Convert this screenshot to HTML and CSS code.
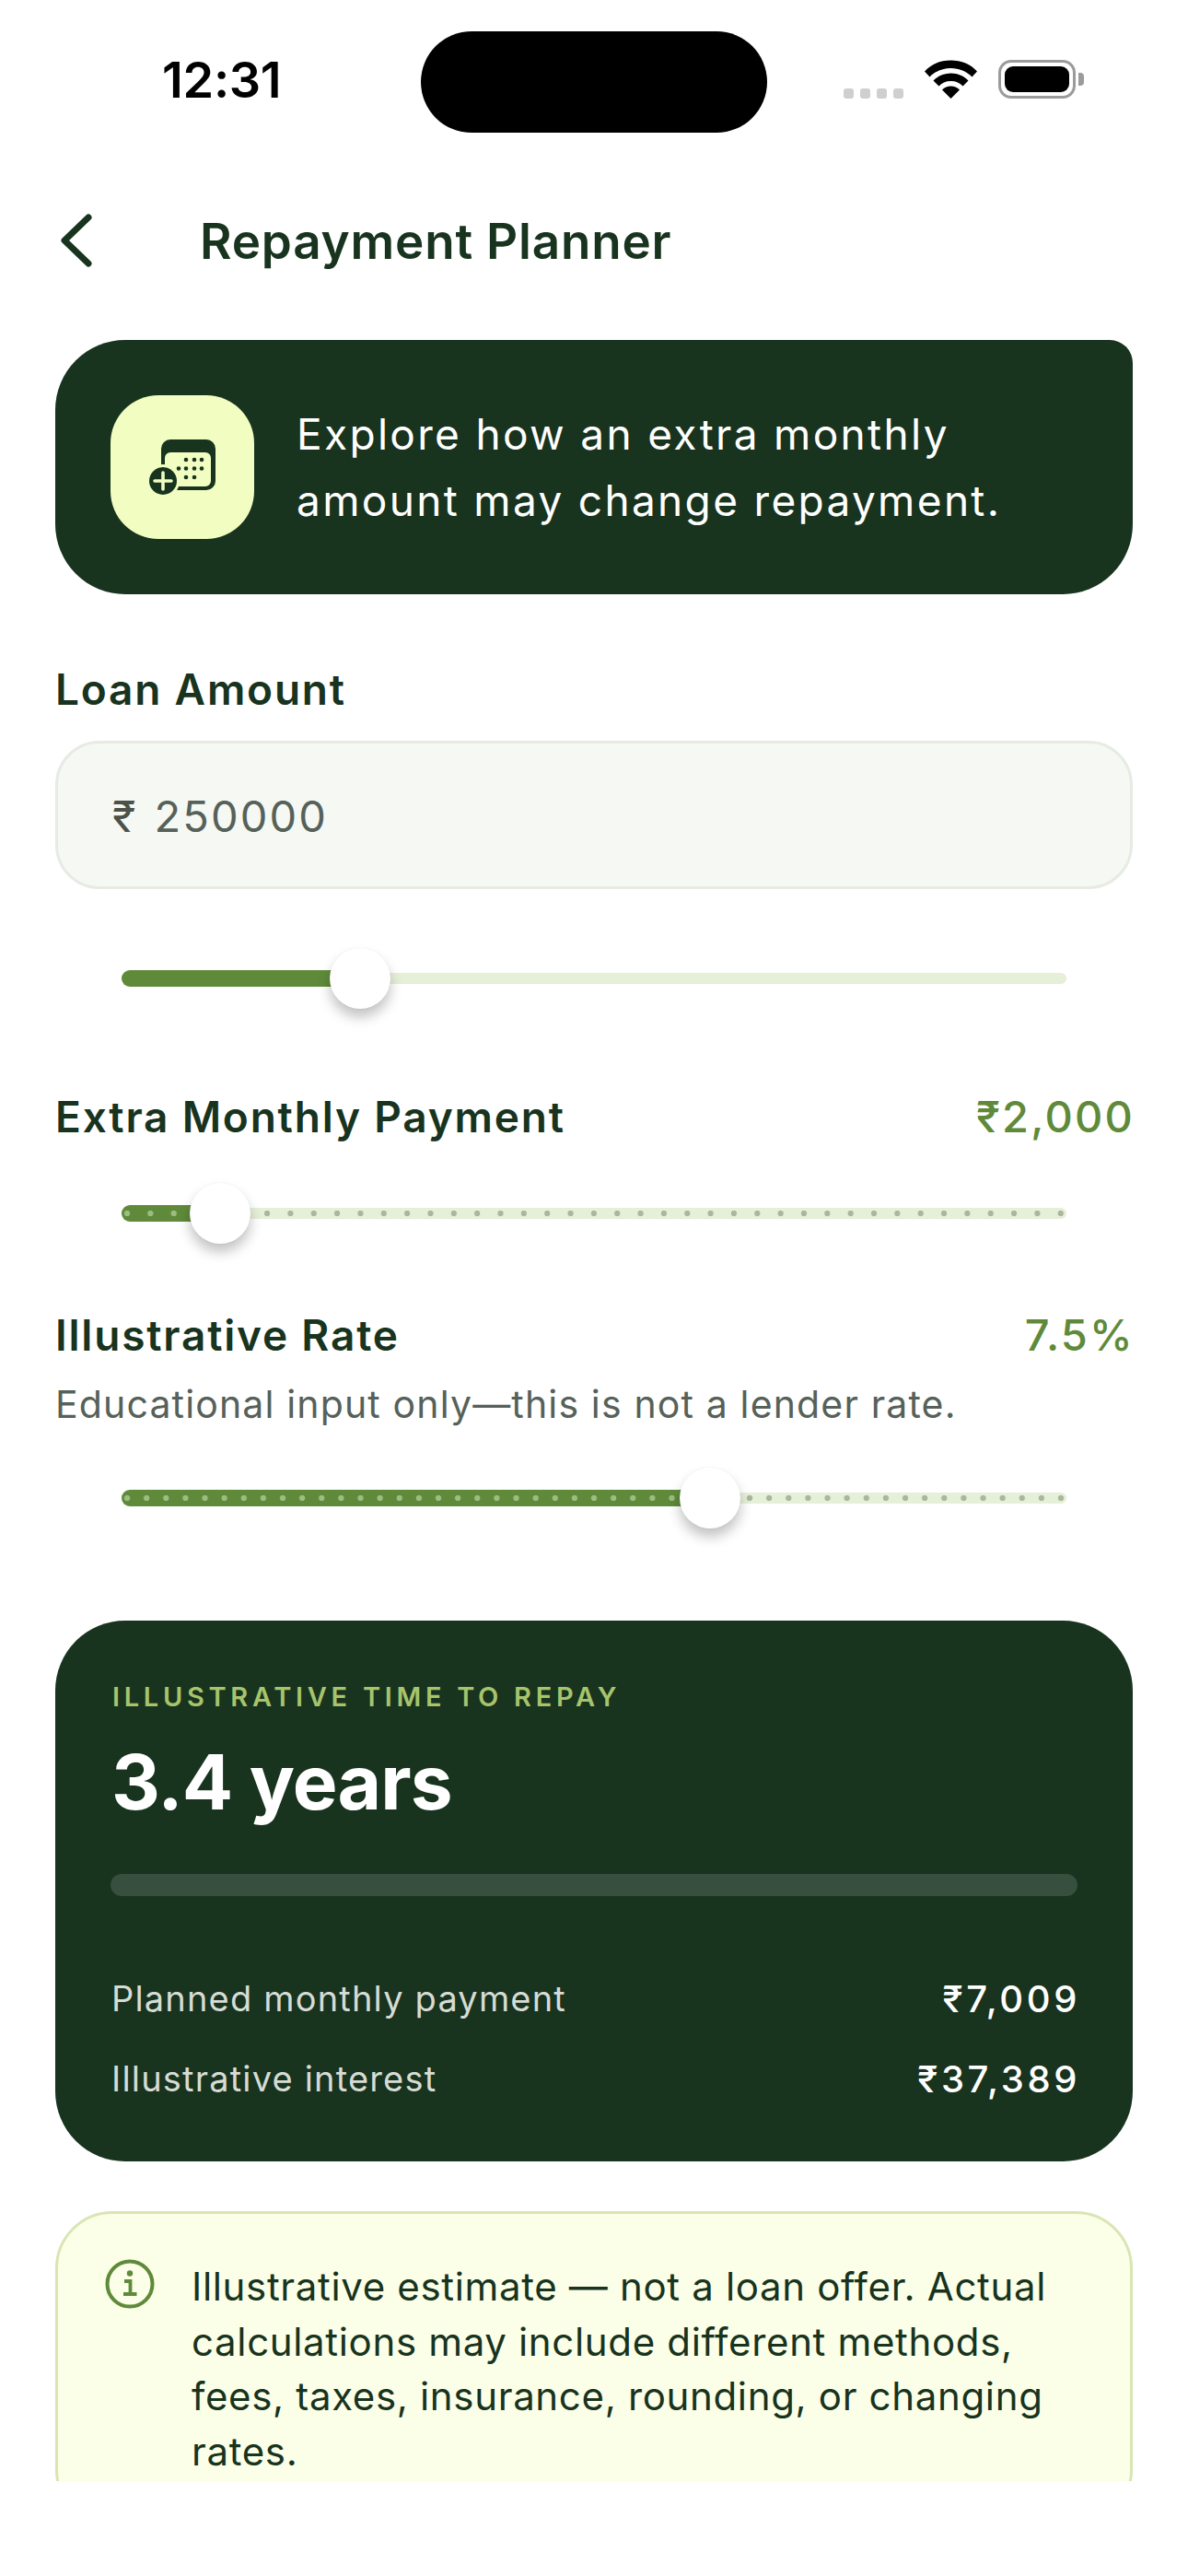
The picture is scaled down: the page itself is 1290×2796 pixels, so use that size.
FILE: index.html
```html
<!DOCTYPE html>
<html lang="en">
<head>
<meta charset="utf-8">
<title>Repayment Planner</title>
<link rel="stylesheet" href="styles.css">
</head>
<body>
<div class="page">
  <header class="status">
    <div class="time">12:31</div>
    <div class="island"></div>
    <div class="status-icons">
      <div class="signal"><i></i><i></i><i></i><i></i></div>
      <svg class="wifi" width="57" height="42" viewBox="0 0 57 42"><path d="M0 12.5C7 4.5 17 0.5 28.5 0.5S50 4.5 57 12.5L51.5 18.5C45.500 12.500 37.500 9 28.5 9S11.500 12.500 5.500 18.500Z"/><path d="M9.500 22.500C14 17.500 21 14.500 28.500 14.500S43 17.500 47.500 22.500L41.500 28.500C38.500 25 34 23 28.500 23S18.500 25 15.500 28.500Z"/><path d="M19 32.500C21.500 30 25 28.500 28.500 28.500S35.500 30 38 32.500L28.500 42Z"/></svg>
      <div class="battery"><div class="battery-level"></div></div>
      <div class="battery-cap"></div>
    </div>
  </header>

  <nav class="nav">
    <svg class="back" width="40" height="64" viewBox="0 0 40 64"><path d="M34 7L8 32L34 57" fill="none" stroke="#18331e" stroke-width="7" stroke-linecap="round" stroke-linejoin="round"/></svg>
    <h1 class="title">Repayment Planner</h1>
  </nav>

  <main class="main">
    <section class="hero">
      <div class="tile">
        <svg width="156" height="156" viewBox="0 0 156 156">
          <path d="M55 58a10 10 0 0 1 10-10h39a10 10 0 0 1 10 10v35a10 10 0 0 1-10 10H66v-4h37a6 6 0 0 0 6-6V68a6 6 0 0 0-6-6H65a6 6 0 0 0-6 6v16h-4Z" fill="#18331e"/>
          <g fill="#18331e"><circle cx="82" cy="70" r="2.300"/><circle cx="91" cy="70" r="2.300"/><circle cx="99" cy="70" r="2.300"/><circle cx="74" cy="79.500" r="2.300"/><circle cx="82" cy="79.500" r="2.300"/><circle cx="91" cy="79.500" r="2.300"/><circle cx="99" cy="79.500" r="2.300"/><circle cx="82" cy="89" r="2.300"/><circle cx="91" cy="89" r="2.300"/></g>
          <circle cx="57" cy="93" r="18" fill="#f1fdc1"/>
          <circle cx="57" cy="93" r="15" fill="#18331e"/>
          <path d="M48 93H66M57 84V102" stroke="#f1fdc1" stroke-width="3.600" stroke-linecap="round"/>
        </svg>
      </div>
      <p class="hero-text">Explore how an extra monthly<br>amount may change repayment.</p>
    </section>

    <h2 class="label loan-label">Loan Amount</h2>
    <div class="input"><span class="rupee">₹</span><span class="amount">250000</span></div>

    <div class="slider slider-one">
      <div class="track"></div>
      <div class="fill" style="width:25.2%"></div>
      <div class="thumb" style="left:25.2%"></div>
    </div>

    <div class="row extra-row">
      <h2 class="label">Extra Monthly Payment</h2>
      <span class="value">₹2,000</span>
    </div>
    <div class="slider slider-two">
      <div class="track dots-wide"></div>
      <div class="fill dots-wide-fill" style="width:10.4%"></div>
      <div class="thumb" style="left:10.4%"></div>
    </div>

    <div class="row rate-row">
      <h2 class="label">Illustrative Rate</h2>
      <span class="value">7.5%</span>
    </div>
    <p class="hint">Educational input only—this is not a lender rate.</p>
    <div class="slider slider-two">
      <div class="track dots-dense"></div>
      <div class="fill dots-dense-fill" style="width:62.3%"></div>
      <div class="thumb" style="left:62.3%"></div>
    </div>

    <section class="result">
      <div class="eyebrow">ILLUSTRATIVE TIME TO REPAY</div>
      <div class="big">3.4 years</div>
      <div class="bar"></div>
      <div class="result-row first"><span class="result-key">Planned monthly payment</span><span class="result-value">₹7,009</span></div>
      <div class="result-row second"><span class="result-key">Illustrative interest</span><span class="result-value">₹37,389</span></div>
    </section>

    <section class="notice">
      <svg class="info" width="54" height="54" viewBox="0 0 54 54"><circle cx="27" cy="27" r="24.500" fill="none" stroke="#5f8a3a" stroke-width="4"/><circle cx="27" cy="15.500" r="3.200" fill="#5f8a3a"/><path d="M21 24H27.500V38M20 38H34.500" fill="none" stroke="#5f8a3a" stroke-width="3.800"/></svg>
      <p class="notice-text">Illustrative estimate — not a loan offer. Actual calculations may include different methods, fees, taxes, insurance, rounding, or changing rates.</p>
    </section>
  </main>
</div>
</body>
</html>
```
FILE: styles.css
```css
* { box-sizing: border-box; }
html, body { margin: 0; padding: 0; background: #fff; }
body { font-family: Inter, "Liberation Sans", sans-serif; color: #18331e; }
h1, h2, p { margin: 0; }

.page { height: 2693px; overflow: hidden; background: #fff; }

.status { height: 144px; padding-top: 34px; display: grid; grid-template-columns: 457px 376px 1fr; }
.time { padding: 23px 0 0 176px; font-size: 54px; line-height: 60px; font-weight: 600; color: #000; letter-spacing: -0.300px; }
.island { height: 110px; border-radius: 55px; background: #000; }
.status-icons { position: relative; display: flex; align-items: flex-end; height: 73px; padding-left: 83px; }
.signal { display: flex; gap: 7px; margin-right: 23px; }
.signal i { display: block; width: 11px; height: 11px; border-radius: 3px; background: #cfcfcf; }
.wifi { display: block; margin-right: 23px; }
.battery { width: 84px; height: 42px; padding: 4px; border: 3.500px solid #9b9b9b; border-radius: 14px; background: #fff; }
.battery-level { height: 100%; border-radius: 9px; background: #000; }
.battery-cap { width: 6px; height: 14px; margin: 0 0 14px 3px; border-radius: 0 4px 4px 0; background: #9b9b9b; }

.nav { display: flex; align-items: center; height: 100px; margin: 67px 0 58px; padding-left: 62px; }
.back { display: block; margin-right: 115px; }
.title { padding-top: 2px; font-size: 53px; line-height: 60px; font-weight: 600; letter-spacing: 0.800px; color: #18331e; }

.main { padding: 0 60px; }

.hero { display: flex; align-items: center; gap: 46px; height: 276px; padding: 0 60px; background: #18331e; border-radius: 76px 25px 76px 76px; }
.tile { width: 156px; height: 156px; flex: none; border-radius: 52px; background: #f1fdc1; }
.tile svg { display: block; }
.hero-text { font-size: 46px; line-height: 72px; letter-spacing: 2.320px; color: #fff; }

.label { font-size: 46px; line-height: 56px; font-weight: 600; letter-spacing: 1.800px; color: #18331e; }
.loan-label { margin-top: 75px; }

.input { display: flex; align-items: center; height: 161px; margin-top: 28px; padding: 2px 0 0 59px; border: 3px solid #e6ebe3; border-radius: 48px; background: #f5f8f3; font-size: 47px; letter-spacing: 2.100px; color: #566159; }
.rupee { margin-right: 18px; color: #4d5249; }

.slider { position: relative; height: 66px; margin: 0 72px; }
.slider-one { margin-top: 64px; }
.slider-two { margin-top: 44px; }
.track { position: absolute; left: 0; right: 0; top: 27px; height: 12px; border-radius: 6px; background: #e6efd8; }
.fill { position: absolute; left: 0; top: 24px; height: 18px; border-radius: 9px; background: #5f8a3a; }
.dots-wide { background-image: radial-gradient(circle, #a9b89c 3px, transparent 3.500px); background-size: 25.350px 100%; background-position: -6.680px 0; background-repeat: repeat-x; }
.dots-wide-fill { background-image: radial-gradient(circle, #9cbc80 3px, transparent 3.500px); background-size: 25.350px 100%; background-position: -6.680px 0; background-repeat: repeat-x; }
.dots-dense { background-image: radial-gradient(circle, #a9b89c 3px, transparent 3.500px); background-size: 21.125px 100%; background-position: -4.560px 0; background-repeat: repeat-x; }
.dots-dense-fill { background-image: radial-gradient(circle, #9cbc80 3px, transparent 3.500px); background-size: 21.125px 100%; background-position: -4.560px 0; background-repeat: repeat-x; }
.thumb { position: absolute; top: 0; width: 66px; height: 66px; margin-left: -33px; border-radius: 50%; background: #fff; box-shadow: 0 9px 14px rgba(0, 0, 0, 0.24), 0 0 2px rgba(0, 0, 0, 0.06); }

.row { display: flex; justify-content: space-between; align-items: center; }
.extra-row { margin-top: 89px; }
.rate-row { margin-top: 71px; }
.value { margin-right: -2px; font-size: 47px; line-height: 56px; font-weight: 500; letter-spacing: 2.200px; color: #5f8a3a; }
.hint { margin-top: 22px; font-size: 41px; line-height: 50px; letter-spacing: 1.150px; color: #566159; }

.result { height: 587px; margin-top: 100px; padding: 63px 60px 0; background: #18331e; border-radius: 76px; color: #fff; }
.eyebrow { padding-left: 2px; font-size: 29px; line-height: 40px; font-weight: 600; letter-spacing: 4.700px; color: #a7c46c; }
.big { margin-top: 23px; padding-left: 1px; font-size: 82px; line-height: 100px; font-weight: 700; letter-spacing: -0.900px; color: #fff; }
.bar { height: 24px; margin-top: 49px; border-radius: 12px; background: #374f3e; }
.result-row { display: flex; justify-content: space-between; align-items: center; height: 50px; padding-left: 1px; }
.result-row.first { margin-top: 86px; }
.result-row.second { margin-top: 37px; }
.result-key { font-size: 38px; letter-spacing: 1.180px; color: #d6dcd5; }
.result-value { margin-right: -3px; font-size: 40px; font-weight: 500; letter-spacing: 3.600px; color: #fff; }

.notice { display: flex; align-items: flex-start; gap: 40px; margin-top: 54px; padding: 49px 50px 50px 51px; border: 3px solid #d9e5b4; border-radius: 62px; background: #fbffe7; }
.info { display: block; flex: none; }
.notice-text { font-size: 42px; line-height: 59.600px; letter-spacing: 0.660px; color: #18331e; }
```
